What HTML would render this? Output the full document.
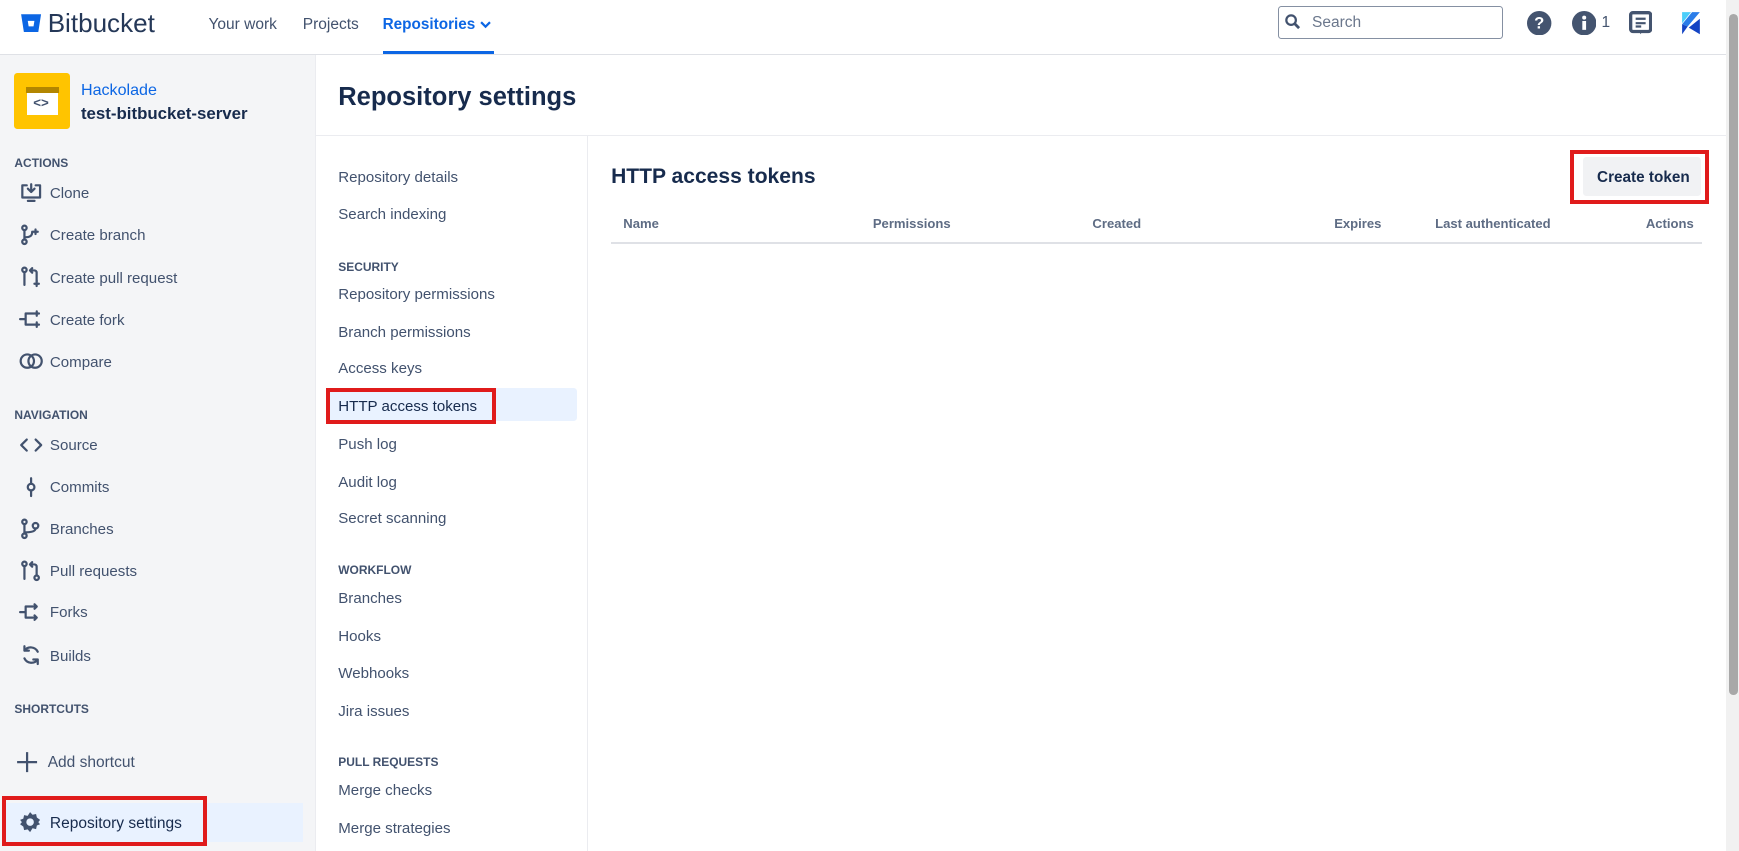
<!DOCTYPE html>
<html><head><meta charset="utf-8">
<style>
html{zoom:1.10906}
body{margin:0;width:1568px;height:767px;overflow:hidden;background:#fff;font-family:"Liberation Sans",sans-serif;color:#172b4d;position:relative}
.a{position:absolute;white-space:nowrap}
.nav{font-size:14px;color:#42526e}
.side{font-size:13.6px;color:#42526e}
.cap{font-size:10.8px;font-weight:bold;color:#42526e}
.mid{font-size:13.6px;color:#42526e}
.th{font-size:11.8px;font-weight:bold;color:#5e6c84}
svg{position:absolute}
.ic{stroke:#42526e;stroke-width:2;fill:none;stroke-linecap:round;stroke-linejoin:round}
</style></head><body>
<!-- top bar -->
<svg style="left:18px;top:11px" width="20" height="20" viewBox="0 0 20 20"><path d="M1 2h18l-2.5 16h-13z" fill="#0c66e4"/><path d="M7 8h6l-.8 5h-4.4z" fill="#fff"/></svg>
<div class="a" style="left:43px;top:7px;font-size:23.5px;color:#253858">Bitbucket</div>
<div class="a nav" style="left:188px;top:14px">Your work</div>
<div class="a nav" style="left:273px;top:14px">Projects</div>
<div class="a nav" style="left:345px;top:14px;color:#0c66e4;font-weight:bold;font-size:13.8px">Repositories</div>
<svg style="left:433px;top:18px" width="10" height="8"><path d="M1 2l4 4 4-4" stroke="#0c66e4" stroke-width="2" fill="none"/></svg>
<div class="a" style="left:345px;top:46px;width:100px;height:3px;background:#0c66e4"></div>
<div class="a" style="left:0;top:49px;width:1556px;height:1px;background:#dfe1e6"></div>
<div class="a" style="left:1152px;top:5px;width:203px;height:30px;border:1px solid #8590a2;border-radius:3px;box-sizing:border-box"></div>
<svg style="left:1159px;top:13px" width="14" height="14"><circle cx="5.5" cy="5.5" r="4.3" stroke="#42526e" stroke-width="2" fill="none"/><path d="M8.7 8.7l4 4" stroke="#42526e" stroke-width="2.5"/></svg>
<div class="a" style="left:1183px;top:13px;font-size:14px;color:#6b778c">Search</div>
<svg style="left:1377px;top:10px" width="22" height="22"><circle cx="11" cy="11" r="11" fill="#44546f"/><text x="11" y="16" text-anchor="middle" font-size="15" font-weight="bold" fill="#fff" font-family="Liberation Sans">?</text></svg>
<svg style="left:1417px;top:10px" width="22" height="22"><circle cx="11" cy="11" r="11" fill="#44546f"/><rect x="9.3" y="9" width="3.4" height="8" fill="#fff"/><circle cx="11" cy="6" r="1.8" fill="#fff"/></svg>
<div class="a" style="left:1444px;top:13px;font-size:14px;color:#44546f">1</div>
<svg style="left:1469px;top:10px" width="21" height="22"><rect x="1.5" y="1.5" width="18" height="17" rx="2" stroke="#44546f" stroke-width="3" fill="none"/><path d="M6 7h9M6 11h9M6 14h5" stroke="#44546f" stroke-width="2"/><path d="M9 18l1.5 3 1.5-3" fill="#44546f"/></svg>
<svg style="left:1516px;top:10px" width="20" height="22"><path d="M1 1h8l-8 10z" fill="#4bcefa"/><path d="M1 12l9-11h7L6 14z" fill="#2b7de9"/><path d="M1 21V12l5 2z M7 15l10 6V7z" fill="#1444c4"/></svg>
<!-- scrollbar -->
<div class="a" style="left:1556px;top:0;width:12px;height:767px;background:#f1f1f1"></div>
<div class="a" style="left:1559px;top:13px;width:8px;height:614px;background:#a8a8a8;border-radius:4px"></div>
<!-- sidebar -->
<div class="a" style="left:0;top:50px;width:284px;height:717px;background:#f4f5f7;border-right:1px solid #ebecf0"></div>
<div class="a" style="left:13px;top:66px;width:50px;height:50px;background:#ffc400;border-radius:3px"></div>
<div class="a" style="left:23px;top:78px;width:30px;height:6px;background:#b38600"></div>
<div class="a" style="left:24px;top:84px;width:28px;height:20px;background:#fff"></div>
<div class="a" style="left:30px;top:86px;font-size:12px;color:#42526e;font-weight:bold">&lt;&gt;</div>
<div class="a" style="left:73px;top:73px;font-size:14.5px;color:#0c66e4">Hackolade</div>
<div class="a" style="left:73px;top:94px;font-size:15.2px;font-weight:bold;color:#172b4d">test-bitbucket-server</div>
<div class="a cap" style="left:13px;top:141px">ACTIONS</div>
<svg style="left:17px;top:164px" width="22" height="20"><g class="ic"><path d="M7 3H3v11h16V3h-4"/><path d="M11 2v7M8 6l3 3 3-3"/><path d="M8 17h6"/></g></svg>
<div class="a side" style="left:45px;top:167px">Clone</div>
<svg style="left:18px;top:202px" width="20" height="20"><g class="ic"><circle cx="4" cy="3.5" r="2"/><circle cx="4" cy="16" r="2"/><path d="M4 5.5v8.5M4 12c6 0 7-2 7-5"/><path d="M14 5v4M12 7h4"/></g></svg>
<div class="a side" style="left:45px;top:205px">Create branch</div>
<svg style="left:18px;top:240px" width="20" height="20"><g class="ic"><circle cx="4" cy="3.5" r="2"/><path d="M4 5.5V17"/><path d="M11 4h2a2 2 0 0 1 2 2v8M9 4l2-2M9 4l2 2"/><path d="M15 13v5M13 16h4"/></g></svg>
<div class="a side" style="left:45px;top:243px">Create pull request</div>
<svg style="left:17px;top:278px" width="22" height="20"><g class="ic"><path d="M1 10h5M6 10V5h8M6 10v5h8M16 3v4M14 5h4M16 13v4M14 15h4"/></g></svg>
<div class="a side" style="left:45px;top:281px">Create fork</div>
<svg style="left:17px;top:316px" width="22" height="20"><g class="ic"><circle cx="7.5" cy="10" r="6"/><circle cx="14.5" cy="10" r="6"/></g></svg>
<div class="a side" style="left:45px;top:319px">Compare</div>
<div class="a cap" style="left:13px;top:368px">NAVIGATION</div>
<svg style="left:17px;top:391px" width="22" height="20"><g class="ic"><path d="M7 5l-5 5 5 5M15 5l5 5-5 5"/></g></svg>
<div class="a side" style="left:45px;top:394px">Source</div>
<svg style="left:18px;top:429px" width="20" height="20"><g class="ic"><circle cx="10" cy="10" r="3"/><path d="M10 2v5M10 13v5"/></g></svg>
<div class="a side" style="left:45px;top:432px">Commits</div>
<svg style="left:18px;top:467px" width="20" height="20"><g class="ic"><circle cx="4" cy="3.5" r="2"/><circle cx="4" cy="16" r="2"/><circle cx="14" cy="7" r="2.5"/><path d="M4 5.5v8.5M4 13c6 0 10-1 10-3.5"/></g></svg>
<div class="a side" style="left:45px;top:470px">Branches</div>
<svg style="left:18px;top:505px" width="20" height="20"><g class="ic"><circle cx="4" cy="3.5" r="2"/><path d="M4 5.5V17"/><path d="M11 4h2a2 2 0 0 1 2 2v8M9 4l2-2M9 4l2 2"/><circle cx="15" cy="16" r="2"/></g></svg>
<div class="a side" style="left:45px;top:508px">Pull requests</div>
<svg style="left:17px;top:542px" width="22" height="20"><g class="ic"><path d="M1 10h5M6 10V5h10M6 10v5h10M14 3l2 2-2 2M14 13l2 2-2 2"/></g></svg>
<div class="a side" style="left:45px;top:545px">Forks</div>
<svg style="left:18px;top:581px" width="20" height="20"><g class="ic"><path d="M16 7a7 7 0 0 0-12-1M4 13a7 7 0 0 0 12 1M4 2v4h4M16 18v-4h-4"/></g></svg>
<div class="a side" style="left:45px;top:584px">Builds</div>
<div class="a cap" style="left:13px;top:633px">SHORTCUTS</div>
<svg style="left:14px;top:677px" width="20" height="20"><path d="M10 1v18M1 10h18" stroke="#42526e" stroke-width="2"/></svg>
<div class="a side" style="left:43px;top:680px;font-size:14px">Add shortcut</div>
<div class="a" style="left:5px;top:724px;width:268px;height:35px;background:#e9f2ff"></div>
<svg style="left:17px;top:731px" width="20" height="20"><path fill="#42526e" fill-rule="evenodd" d="M10 1l2.2 2.4 3.2-.7.7 3.2L19 8l-1.6 2 1.6 2-2.9 1.1-.7 3.2-3.2-.7L10 19l-2.2-2.4-3.2.7-.7-3.2L1 12l1.6-2L1 8l2.9-1.1.7-3.2 3.2.7z M10 6.6a3.4 3.4 0 1 0 0 6.8 3.4 3.4 0 1 0 0-6.8z"/></svg>
<div class="a side" style="left:45px;top:735px;color:#172b4d;font-size:14px">Repository settings</div>
<div class="a" style="left:2px;top:718px;width:185px;height:45px;border:4px solid #e01b1b;box-sizing:border-box"></div>
<!-- header -->
<div class="a" style="left:305px;top:75px;font-size:23px;font-weight:bold;color:#172b4d">Repository settings</div>
<div class="a" style="left:285px;top:122px;width:1271px;height:1px;background:#ebecf0"></div>
<div class="a" style="left:529px;top:123px;width:1px;height:644px;background:#ebecf0"></div>
<!-- settings nav -->
<div class="a mid" style="left:305px;top:152px">Repository details</div>
<div class="a mid" style="left:305px;top:186px">Search indexing</div>
<div class="a cap" style="left:305px;top:234px">SECURITY</div>
<div class="a mid" style="left:305px;top:258px">Repository permissions</div>
<div class="a mid" style="left:305px;top:292px">Branch permissions</div>
<div class="a mid" style="left:305px;top:325px">Access keys</div>
<div class="a" style="left:295px;top:350px;width:225px;height:30px;background:#e9f2ff;border-radius:3px"></div>
<div class="a mid" style="left:305px;top:359px;color:#172b4d">HTTP access tokens</div>
<div class="a" style="left:294px;top:350px;width:153px;height:32px;border:4px solid #e01b1b;box-sizing:border-box"></div>
<div class="a mid" style="left:305px;top:393px">Push log</div>
<div class="a mid" style="left:305px;top:427px">Audit log</div>
<div class="a mid" style="left:305px;top:460px">Secret scanning</div>
<div class="a cap" style="left:305px;top:508px">WORKFLOW</div>
<div class="a mid" style="left:305px;top:532px">Branches</div>
<div class="a mid" style="left:305px;top:566px">Hooks</div>
<div class="a mid" style="left:305px;top:600px">Webhooks</div>
<div class="a mid" style="left:305px;top:634px">Jira issues</div>
<div class="a cap" style="left:305px;top:681px">PULL REQUESTS</div>
<div class="a mid" style="left:305px;top:705px">Merge checks</div>
<div class="a mid" style="left:305px;top:739px">Merge strategies</div>
<!-- content -->
<div class="a" style="left:551px;top:149px;font-size:19px;font-weight:bold;color:#172b4d">HTTP access tokens</div>
<div class="a" style="left:1427px;top:142px;width:107px;height:35px;background:#f1f2f4;border-radius:3px"></div>
<div class="a" style="left:1440px;top:152px;font-size:13.8px;font-weight:bold;color:#172b4d">Create token</div>
<div class="a" style="left:1416px;top:135px;width:125px;height:49px;border:4px solid #e01b1b;box-sizing:border-box"></div>
<div class="a th" style="left:562px;top:195px">Name</div>
<div class="a th" style="left:787px;top:195px">Permissions</div>
<div class="a th" style="left:985px;top:195px">Created</div>
<div class="a th" style="left:1203px;top:195px">Expires</div>
<div class="a th" style="left:1294px;top:195px">Last authenticated</div>
<div class="a th" style="left:1484px;top:195px">Actions</div>
<div class="a" style="left:551px;top:218px;width:984px;height:2px;background:#dfe1e6"></div>
</body></html>
